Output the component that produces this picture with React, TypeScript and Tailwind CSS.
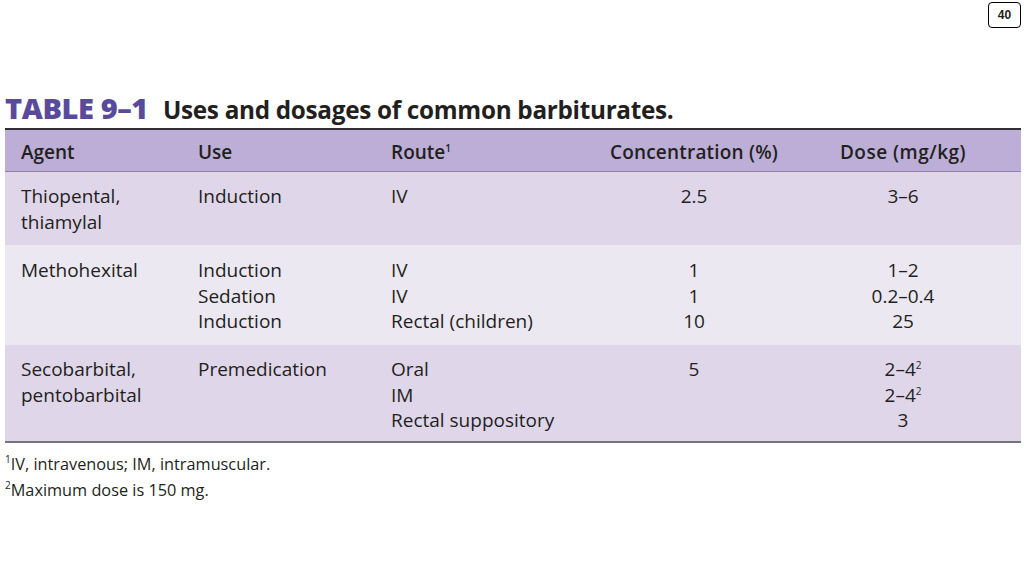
import React from "react";

const font = { fontFamily: '"Open Sans", "Noto Sans", sans-serif' };

function Sup({ children }: { children: React.ReactNode }) {
  return <span className="text-[10px] leading-none relative -top-[7px]">{children}</span>;
}

const cols = "grid grid-cols-[193px_193px_203px_200px_218px_1fr]";

export default function App() {
  return (
    <div className="w-[1024px] h-[576px] bg-white relative overflow-hidden text-[#231f20]" style={font}>
      <div className="absolute right-[3px] top-[2px] w-[33px] h-[26px] border border-black rounded-[4px] flex items-center justify-center text-[12px] font-bold" style={{ fontFamily: '"Liberation Sans", Arial, sans-serif' }}>
        40
      </div>
      <div className="pt-[86px] pl-[5px] pr-[3px]">
        <div className="flex items-baseline h-[40px]">
          <span className="text-[29px] font-extrabold text-[#5a4a9c] tracking-[-0.4px]">TABLE 9–1</span>
          <span className="ml-[15px] text-[24.3px] font-bold tracking-[-0.3px]">Uses and dosages of common barbiturates.</span>
        </div>
        <div className="mt-[2px] border-t-2 border-[#2f2d35]">
          <div className={`${cols} h-[42px] items-center pt-[3px] bg-[#bcaed6] border-b border-[#8c82a3] text-[19px] font-semibold`}>
            <div className="pl-[16px]">Agent</div>
            <div>Use</div>
            <div>Route<Sup>1</Sup></div>
            <div className="text-center tracking-[0.2px]">Concentration (%)</div>
            <div className="text-center tracking-[0.5px]">Dose (mg/kg)</div>
            <div />
          </div>
          <div className="text-[19px] leading-[25.5px]">
            <div className={`${cols} h-[73px] pt-[12px] bg-[#e0d6ea]`}>
              <div className="pl-[16px]">Thiopental,<br />thiamylal</div>
              <div>Induction</div>
              <div>IV</div>
              <div className="text-center">2.5</div>
              <div className="text-center">3–6</div>
              <div />
            </div>
            <div className={`${cols} h-[100px] pt-[13px] bg-[#ece8f2]`}>
              <div className="pl-[16px]">Methohexital</div>
              <div>Induction<br />Sedation<br />Induction</div>
              <div>IV<br />IV<br />Rectal (children)</div>
              <div className="text-center">1<br />1<br />10</div>
              <div className="text-center">1–2<br />0.2–0.4<br />25</div>
              <div />
            </div>
            <div className={`${cols} h-[98px] pt-[12px] bg-[#e0d6ea] border-b-2 border-[#77737d]`}>
              <div className="pl-[16px]">Secobarbital,<br />pentobarbital</div>
              <div>Premedication</div>
              <div>Oral<br />IM<br />Rectal suppository</div>
              <div className="text-center">5</div>
              <div className="text-center">2–4<Sup>2</Sup><br />2–4<Sup>2</Sup><br />3</div>
              <div />
            </div>
          </div>
        </div>
        <div className="text-[16.3px] leading-[26px] pt-[8px]">
          <div><Sup>1</Sup>IV, intravenous; IM, intramuscular.</div>
          <div><Sup>2</Sup>Maximum dose is 150 mg.</div>
        </div>
      </div>
    </div>
  );
}
